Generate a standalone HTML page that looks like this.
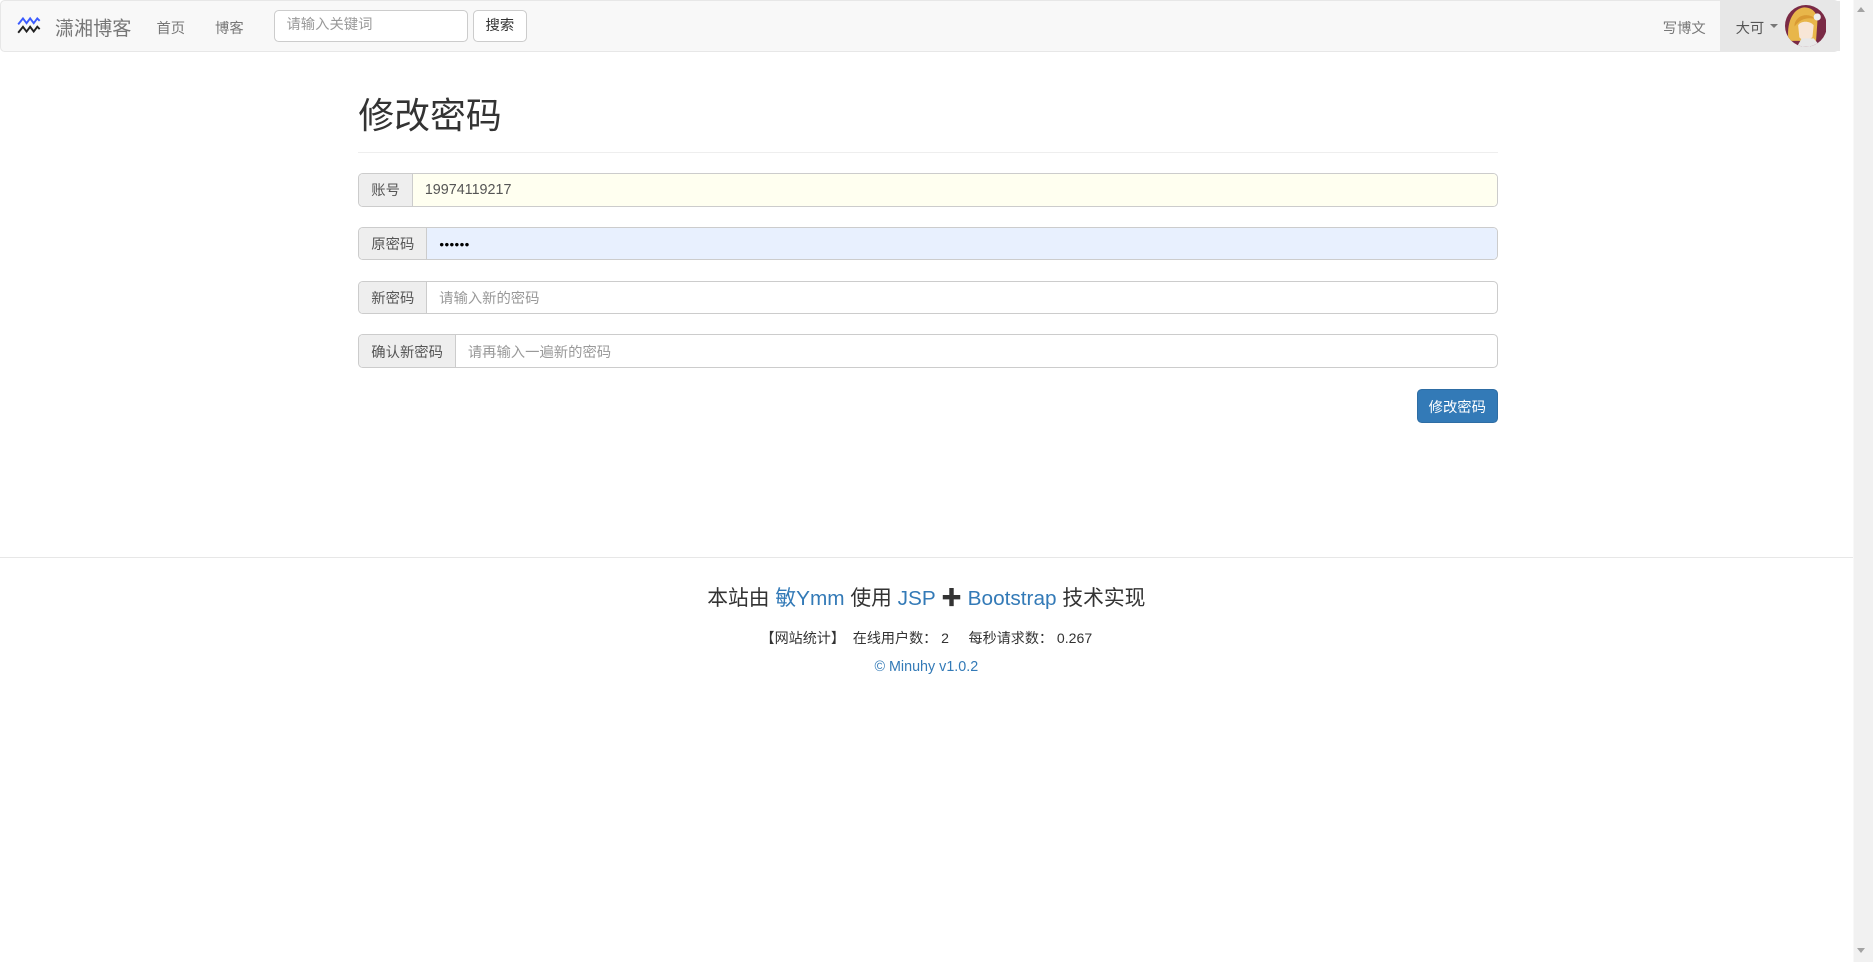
<!DOCTYPE html>
<html><head><meta charset="utf-8"><style>
html,body{margin:0;padding:0;background:#fff;overflow:hidden}
body{zoom:1.1945;width:1568px;height:805px;position:relative;font-family:"Liberation Sans","Noto Sans CJK SC",sans-serif;color:#333;font-size:12px}
.abs{position:absolute}
.nav{left:0;top:0;width:1538px;height:42px;background:#f8f8f8;border:1px solid #e7e7e7;border-radius:4px}
.brand{left:46px;top:11px;font-size:16px;color:#777}
.nl{top:14px;font-size:12px;color:#777}
.sin{left:229px;top:8px;width:163px;height:27px;border:1px solid #ccc;border-radius:4px;background:#fff;box-sizing:border-box;font-size:12px;color:#999;padding:0 10px;line-height:25px}
.sbtn{left:396px;top:8px;width:45px;height:27px;border:1px solid #ccc;border-radius:4px;background:#fff;box-sizing:border-box;font-size:12px;color:#333;text-align:center;line-height:26px}
.user{left:1440px;top:1px;width:100px;height:42px;background:#e7e7e7}
.sb{left:1551px;top:0;width:17px;height:805px;background:#f1f1f1;border-left:1px solid #f8f8f8}
h1{position:absolute;left:300px;top:73px;margin:0;font-size:30px;font-weight:400;color:#333}
.hr{left:300px;top:127px;width:954px;height:1px;background:#eee}
.ig{left:300px;width:954px;height:28px;border:1px solid #ccc;border-radius:4px;box-sizing:border-box;display:flex;overflow:hidden}
.ad{background:#eee;border-right:1px solid #ccc;font-size:12px;color:#555;padding:0 10px;display:flex;align-items:center;white-space:nowrap}
.iv{flex:1;font-size:12px;padding:0 10px;display:flex;align-items:center}
.btn{left:1186px;top:326px;width:68px;height:28px;background:#337ab7;border:1px solid #2e6da4;border-radius:4px;box-sizing:border-box;color:#fff;font-size:12px;display:flex;align-items:center;justify-content:center}
.fl{left:0;top:466px;width:1551px;height:1px;background:#e7e7e7}
.ft{left:0;width:1551px;text-align:center}
a{color:#337ab7}
</style></head><body>
<div class="abs nav"></div>
<svg class="abs" style="left:14px;top:13px" width="20" height="16" viewBox="0 0 20 16">
<polyline points="1,7 5,2 8,6 11,2 14,6 17,2 19,4" fill="none" stroke="#3b5bff" stroke-width="1.6"/>
<polyline points="1,14 5,9 8,13 11,9 14,13 17,9 19,11" fill="none" stroke="#222" stroke-width="1.6"/>
</svg>
<div class="abs brand">潇湘博客</div>
<div class="abs nl" style="left:131px">首页</div>
<div class="abs nl" style="left:180px">博客</div>
<div class="abs sin">请输入关键词</div>
<div class="abs sbtn">搜索</div>
<div class="abs nl" style="left:1392px">写博文</div>
<div class="abs user"></div>
<div class="abs nl" style="left:1453px;color:#555">大可</div>
<div class="abs" style="left:1482px;top:20px;width:0;height:0;border-left:3.5px solid transparent;border-right:3.5px solid transparent;border-top:4px solid #777"></div>
<svg class="abs" style="left:1494px;top:4px" width="35" height="35" viewBox="0 0 35 35">
<defs><clipPath id="c"><circle cx="17.5" cy="17.5" r="17.5"/></clipPath></defs>
<g clip-path="url(#c)">
<rect width="35" height="35" fill="#7a2a45"/>
<path d="M3 30 C1 16 6 3 16 2 C24 2 28 8 27 16 L26 30 Z" fill="#e8b64a"/>
<path d="M11 17 C13 13 21 13 24 17 L23 27 C19 30 14 30 12 27Z" fill="#f8e6d6"/>
<path d="M10 35 L14 28 L24 28 L30 35Z" fill="#e8e8e8"/>
<path d="M8 16 C10 8 20 6 26 12 C20 10 13 11 8 18Z" fill="#d99a32"/>
<circle cx="27" cy="10" r="3" fill="#eee"/>
</g></svg>
<div class="abs sb"></div>
<div class="abs" style="left:1555px;top:6px;border-left:4px solid transparent;border-right:4px solid transparent;border-bottom:5px solid #a3a3a3"></div>
<div class="abs" style="left:1555px;top:794px;border-left:4px solid transparent;border-right:4px solid transparent;border-top:5px solid #a3a3a3"></div>

<h1>修改密码</h1>
<div class="abs hr"></div>
<div class="abs ig" style="top:145px"><div class="ad">账号</div><div class="iv" style="background:#fffff0;color:#555">19974119217</div></div>
<div class="abs ig" style="top:190px"><div class="ad">原密码</div><div class="iv" style="background:#e8f0fe;color:#000;font-size:7px;letter-spacing:0px">●●●●●●</div></div>
<div class="abs ig" style="top:235px"><div class="ad">新密码</div><div class="iv" style="color:#999">请输入新的密码</div></div>
<div class="abs ig" style="top:280px"><div class="ad">确认新密码</div><div class="iv" style="color:#999">请再输入一遍新的密码</div></div>
<div class="abs btn">修改密码</div>

<div class="abs fl"></div>
<div class="abs ft" style="top:486px;font-size:17.4px;color:#333">本站由 <a>敏Ymm</a> 使用 <a>JSP</a> <b>✚</b> <a>Bootstrap</a> 技术实现</div>
<div class="abs ft" style="top:526px;font-size:11.8px;color:#333">【网站统计】&nbsp; 在线用户数： 2 &nbsp; &nbsp; 每秒请求数： 0.267</div>
<div class="abs ft" style="top:552px;font-size:12px"><a>© Minuhy v1.0.2</a></div>
</body></html>
